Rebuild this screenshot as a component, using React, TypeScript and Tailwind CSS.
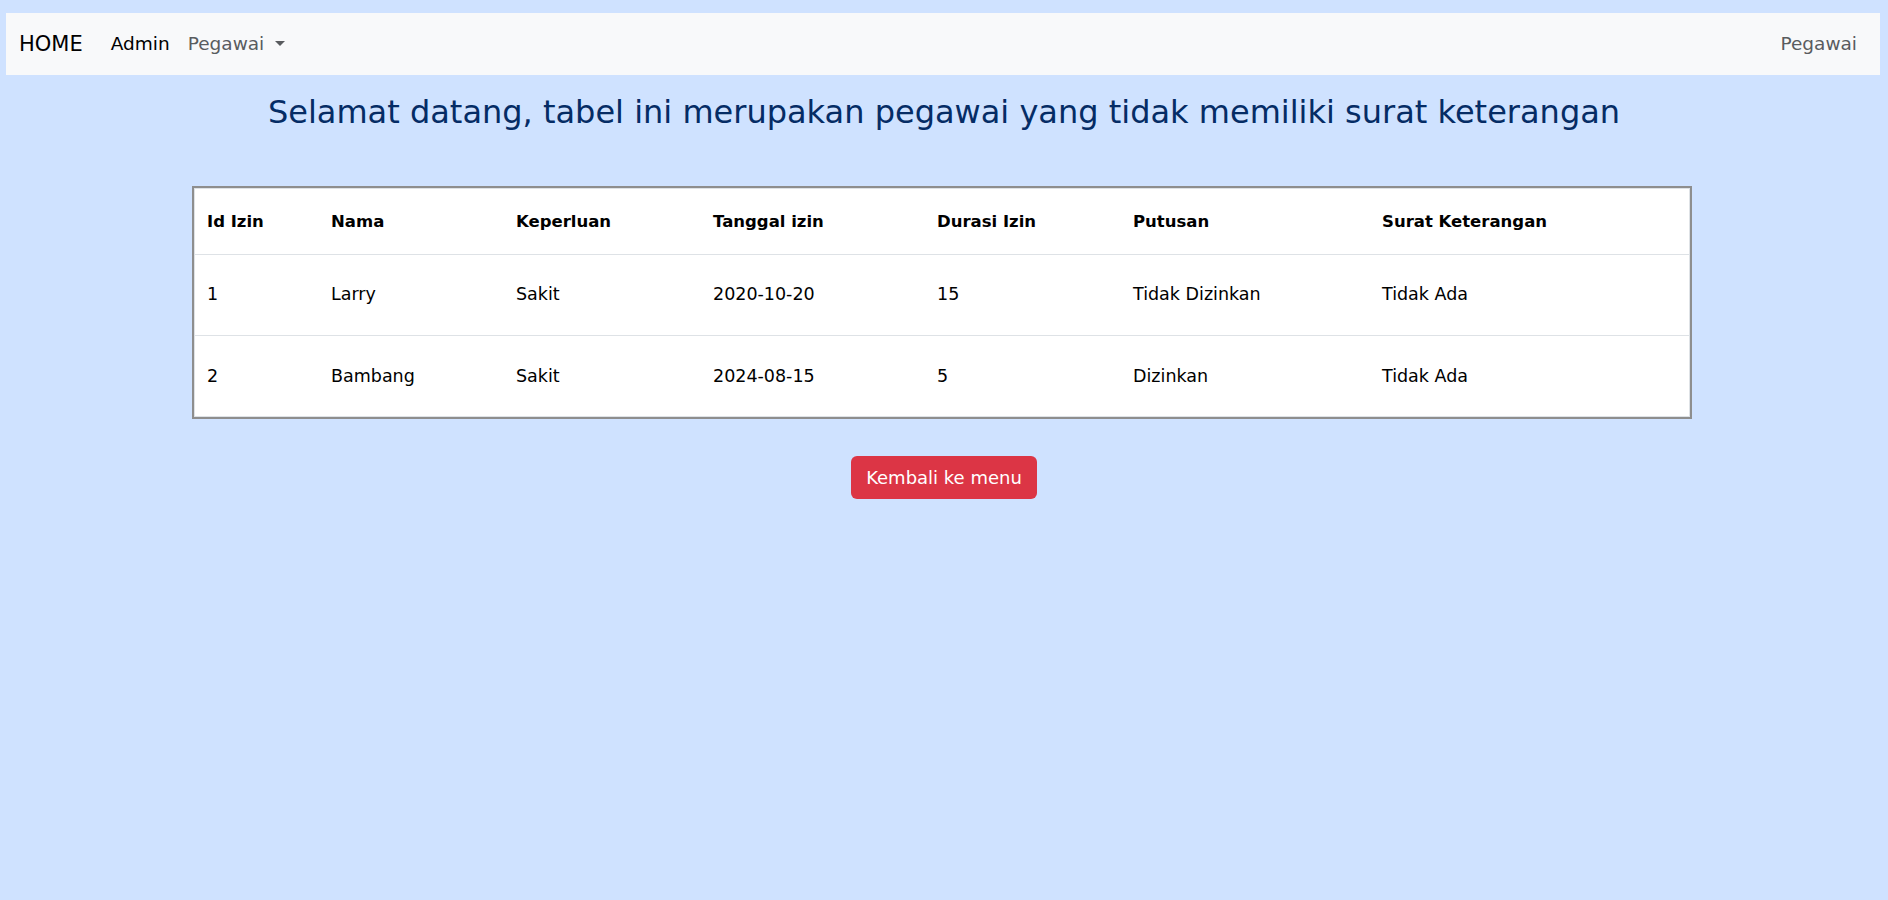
import React from "react";

const rows = [
  ["1", "Larry", "Sakit", "2020-10-20", "15", "Tidak Dizinkan", "Tidak Ada"],
  ["2", "Bambang", "Sakit", "2024-08-15", "5", "Dizinkan", "Tidak Ada"],
];
const heads = ["Id Izin", "Nama", "Keperluan", "Tanggal izin", "Durasi Izin", "Putusan", "Surat Keterangan"];
const widths = ["w-[124px]", "w-[185px]", "w-[197px]", "w-[224px]", "w-[196px]", "w-[249px]", "w-auto"];

export default function App() {
  return (
    <div className="min-h-screen bg-[#cfe2ff] pt-[13px] font-['DejaVu_Sans',sans-serif] text-[#000]">
      <nav className="ml-[6px] mr-[8px] flex h-[62px] items-center bg-[#f8f9fa] pl-[13px] pr-[23px]">
        <span className="text-[21px] leading-none text-black">HOME</span>
        <span className="ml-[28px] text-[18.5px] text-black">Admin</span>
        <span className="ml-[18px] flex items-center text-[18.5px] text-[#595c5f]">
          Pegawai
          <svg className="ml-[11px]" width="10" height="6" viewBox="0 0 10 6">
            <path d="M0 0 L10 0 L5 5 Z" fill="#595c5f" />
          </svg>
        </span>
        <span className="ml-auto text-[18.5px] text-[#595c5f]">Pegawai</span>
      </nav>

      <h2 className="mt-[18px] text-center text-[32px] leading-[38px] text-[#052c65]">
        Selamat datang, tabel ini merupakan pegawai yang tidak memiliki surat keterangan
      </h2>

      <div className="mx-auto mt-[55px] w-[1500px] -translate-x-[2px] border-2 border-[#8e8e8e] bg-white">
        <div className="border border-[#dee2e6]">
          <table className="w-full table-fixed border-collapse">
            <colgroup>
              {widths.map((w, i) => (
                <col key={i} className={w} />
              ))}
            </colgroup>
            <thead>
              <tr className="h-[65px] border-b border-[#dee2e6]">
                {heads.map((h) => (
                  <th key={h} className="px-[12px] pt-[3px] text-left text-[16.5px] font-bold">
                    {h}
                  </th>
                ))}
              </tr>
            </thead>
            <tbody>
              {rows.map((r, ri) => (
                <tr key={ri} className={ri === 0 ? "h-[81px] border-b border-[#dee2e6]" : "h-[81px]"}>
                  {r.map((c, ci) => (
                    <td key={ci} className="px-[12px] text-[17.5px] font-normal">
                      {c}
                    </td>
                  ))}
                </tr>
              ))}
            </tbody>
          </table>
        </div>
      </div>

      <div className="mt-[37px] flex justify-center">
        <button className="h-[43px] w-[186px] rounded-[6px] bg-[#dc3545] text-[18px] text-white">
          Kembali ke menu
        </button>
      </div>
    </div>
  );
}
